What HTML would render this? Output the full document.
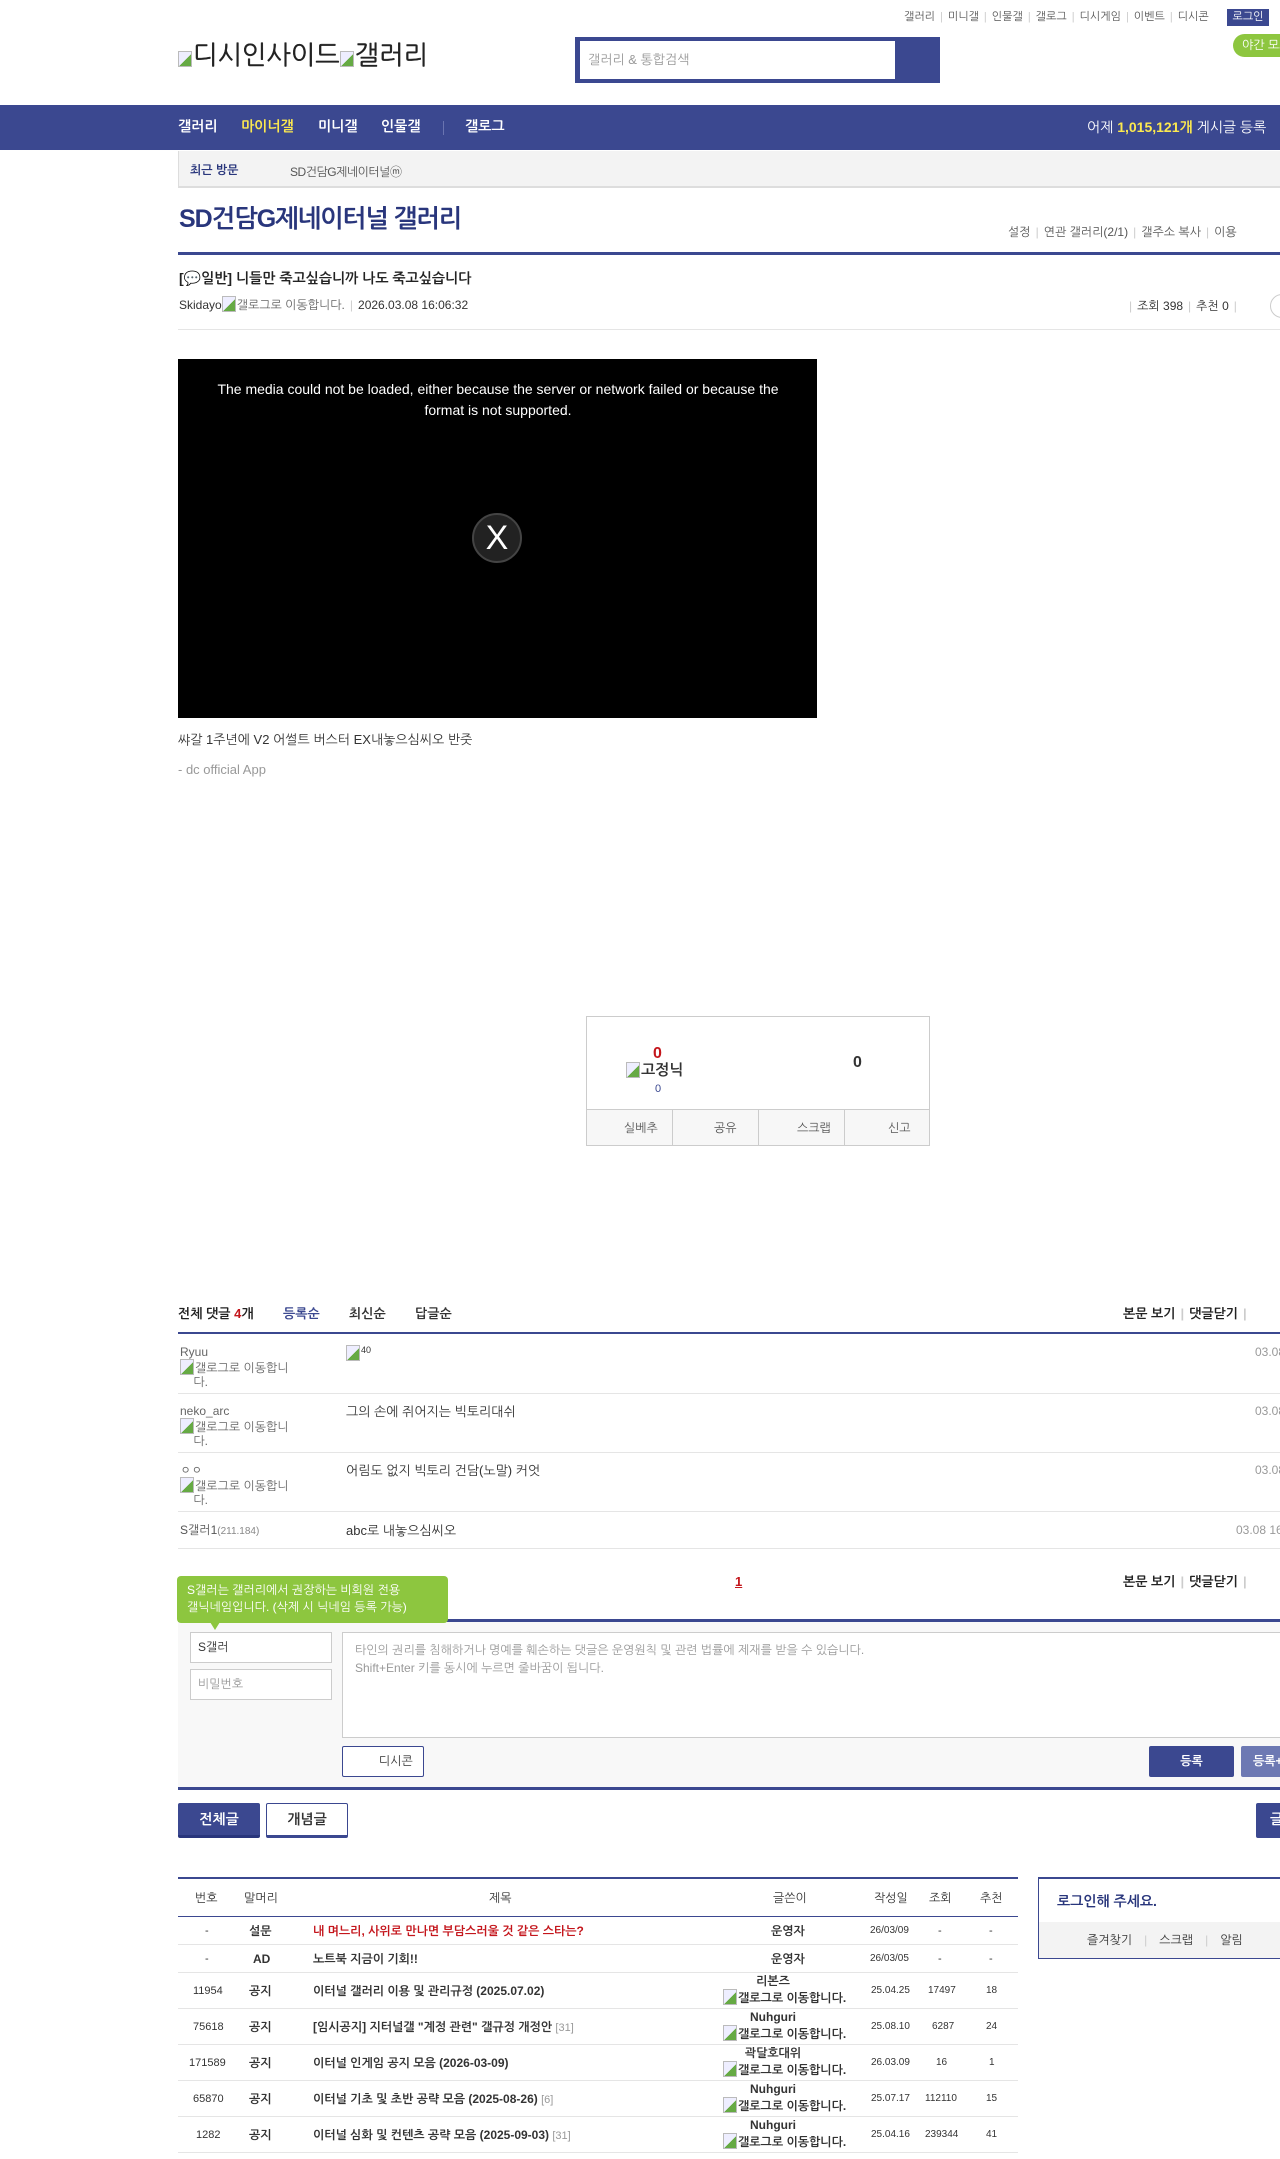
<!DOCTYPE html>
<html><head><meta charset="utf-8">
<style>
*{margin:0;padding:0;box-sizing:border-box}
html,body{width:1280px;height:2159px;overflow:hidden;background:#fff}
body{position:relative;font-family:"Liberation Sans","NanumGothic","Noto Sans CJK KR",sans-serif;font-size:12px;color:#333}
.a{position:absolute;white-space:nowrap}
.bi{display:inline-block;width:14px;height:16px;border:1px solid #bbb;background:linear-gradient(135deg,#eef 0 55%,#6a4 55%);vertical-align:-3px;margin-right:1px}
.nav{color:#fff;font-weight:bold;font-size:14px}
.sep{color:#ccc;margin:0 5px}
.hr{position:absolute;height:1px;background:#e5e5e5}
.bl{position:absolute;background:#3b4890}
</style></head><body>

<div class="a" style="left:904px;top:10px;font-size:11px;color:#555">갤러리<span class="sep">|</span>미니갤<span class="sep">|</span>인물갤<span class="sep">|</span>갤로그<span class="sep">|</span>디시게임<span class="sep">|</span>이벤트<span class="sep">|</span>디시콘</div>
<div class="a" style="left:1227px;top:9px;width:42px;height:17px;background:#3b4890;color:#fff;font-size:11px;text-align:center;line-height:17px">로그인</div>
<div class="a" style="left:1233px;top:34px;width:60px;height:23px;background:#8dc63f;border-radius:12px;color:#fff;font-size:12px;line-height:23px;padding-left:9px">야간 모드</div>

<div class="a" style="left:178px;top:39px;font-size:26px;color:#222;line-height:32px;-webkit-text-stroke:0.4px #222"><span class="bi"></span>디시인사이드<span class="bi"></span>갤러리</div>

<div class="a" style="left:575px;top:37px;width:365px;height:46px;background:#3b4890"></div>
<div class="a" style="left:580px;top:41px;width:315px;height:38px;background:#fff;color:#999;font-size:13px;line-height:38px;padding-left:8px">갤러리 &amp; 통합검색</div>

<div class="a" style="left:0;top:105px;width:1280px;height:45px;background:#3b4890"></div>
<div class="a nav" style="left:178px;top:118px">갤러리</div>
<div class="a nav" style="left:241px;top:118px;color:#fce94f">마이너갤</div>
<div class="a nav" style="left:318px;top:118px">미니갤</div>
<div class="a nav" style="left:381px;top:118px">인물갤</div>
<div class="a" style="left:443px;top:121px;width:1px;height:14px;background:#6a74b0"></div>
<div class="a nav" style="left:465px;top:118px">갤로그</div>
<div class="a" style="left:1087px;top:119px;color:#fff;font-size:14px">어제 <b style="color:#fce94f">1,015,121개</b> 게시글 등록</div>

<div class="a" style="left:178px;top:151px;width:1102px;height:37px;background:#f3f3f3;border-left:1px solid #ddd;border-bottom:2px solid #ddd"></div>
<div class="a" style="left:190px;top:163px;font-size:12px;font-weight:bold;color:#29367c">최근 방문</div>
<div class="a" style="left:290px;top:163px;font-size:12px;color:#555;letter-spacing:-0.5px">SD건담G제네이터널ⓜ</div>

<div class="a" style="left:179px;top:205px;font-size:25px;font-weight:bold;color:#29367c;letter-spacing:-1px">SD건담G제네이터널 갤러리</div>
<div class="a" style="left:1008px;top:225px;font-size:12px;color:#555">설정<span class="sep">|</span>연관 갤러리(2/1)<span class="sep">|</span>갤주소 복사<span class="sep">|</span>이용</div>
<div class="bl" style="left:178px;top:252px;width:1102px;height:3px"></div>

<div class="a" style="left:179px;top:270px;font-size:14px;font-weight:bold;color:#222">[💬일반] 니들만 죽고싶습니까 나도 죽고싶습니다</div>
<div class="a" style="left:179px;top:296px;font-size:12px;color:#333">Skidayo<span class="bi"></span><span style="color:#666">갤로그로 이동합니다.</span><span class="sep">|</span>2026.03.08 16:06:32</div>
<div class="a" style="left:1124px;top:299px;font-size:12px;color:#333"><span class="sep">|</span>조회 398<span class="sep">|</span>추천 0<span class="sep">|</span></div>
<div class="a" style="left:1270px;top:294px;width:24px;height:24px;border:1px solid #ccc;border-radius:12px"></div>
<div class="hr" style="left:178px;top:329px;width:1102px"></div>

<div class="a" style="left:178px;top:359px;width:639px;height:359px;background:#000"></div>
<div class="a" style="left:198px;top:379px;width:600px;white-space:normal;text-align:center;color:#fff;font-size:14px;line-height:21px">The media could not be loaded, either because the server or network failed or because the format is not supported.</div>
<div class="a" style="left:472px;top:513px;width:50px;height:50px;border-radius:25px;background:#222;border:2px solid #444;color:#fff;font-size:34px;line-height:46px;text-align:center">X</div>

<div class="a" style="left:178px;top:732px;font-size:13px;color:#333">쌰갈 1주년에 V2 어썰트 버스터 EX내놓으심씨오 반줏</div>
<div class="a" style="left:178px;top:762px;font-size:13px;color:#999">- dc official App</div>

<div class="a" style="left:586px;top:1016px;width:344px;height:130px;border:1px solid #ccc"></div>
<div class="a" style="left:586px;top:1109px;width:344px;height:37px;background:#f7f7f7;border:1px solid #ccc"></div>
<div class="a" style="left:672px;top:1109px;width:1px;height:37px;background:#ccc"></div>
<div class="a" style="left:758px;top:1109px;width:1px;height:37px;background:#ccc"></div>
<div class="a" style="left:844px;top:1109px;width:1px;height:37px;background:#ccc"></div>
<div class="a" style="left:624px;top:1121px;font-size:12px;color:#555">실베추</div>
<div class="a" style="left:714px;top:1121px;font-size:12px;color:#555">공유</div>
<div class="a" style="left:797px;top:1121px;font-size:12px;color:#555">스크랩</div>
<div class="a" style="left:888px;top:1121px;font-size:12px;color:#555">신고</div>
<div class="a" style="left:653px;top:1045px;font-size:16px;font-weight:bold;color:#c4161c">0</div>
<div class="a" style="left:626px;top:1062px;font-size:15px;font-weight:bold;color:#333"><span class="bi"></span>고정닉</div>
<div class="a" style="left:655px;top:1083px;font-size:11px;color:#3b4890">0</div>
<div class="a" style="left:853px;top:1054px;font-size:16px;font-weight:bold;color:#333">0</div>

<div class="a" style="left:178px;top:1306px;font-size:13px;font-weight:bold;color:#222">전체 댓글 <span style="color:#c4161c">4</span>개</div>
<div class="a" style="left:283px;top:1306px;font-size:13px;font-weight:bold;color:#3b4890">등록순</div>
<div class="a" style="left:349px;top:1306px;font-size:13px;font-weight:bold;color:#333">최신순</div>
<div class="a" style="left:415px;top:1306px;font-size:13px;font-weight:bold;color:#333">답글순</div>
<div class="a" style="left:1123px;top:1306px;font-size:13px;font-weight:bold;color:#222">본문 보기<span class="sep">|</span>댓글닫기<span class="sep">|</span></div>
<div class="bl" style="left:178px;top:1332px;width:1102px;height:2px"></div>

<div class="a" style="left:180px;top:1345px;font-size:12px;color:#666;line-height:14px">Ryuu<br><span class="bi"></span>갤로그로 이동합니<br>&nbsp;&nbsp;&nbsp;&nbsp;다.</div>
<div class="a" style="left:346px;top:1345px"><span class="bi"></span><span style="font-size:9px;vertical-align:top">40</span></div>
<div class="a" style="left:1255px;top:1345px;font-size:12px;color:#999">03.08</div>
<div class="hr" style="left:178px;top:1393px;width:1102px"></div>

<div class="a" style="left:180px;top:1404px;font-size:12px;color:#666;line-height:14px">neko_arc<br><span class="bi"></span>갤로그로 이동합니<br>&nbsp;&nbsp;&nbsp;&nbsp;다.</div>
<div class="a" style="left:346px;top:1404px;font-size:13px;color:#333">그의 손에 쥐어지는 빅토리대쉬</div>
<div class="a" style="left:1255px;top:1404px;font-size:12px;color:#999">03.08</div>
<div class="hr" style="left:178px;top:1452px;width:1102px"></div>

<div class="a" style="left:180px;top:1463px;font-size:12px;color:#666;line-height:14px">ㅇㅇ<br><span class="bi"></span>갤로그로 이동합니<br>&nbsp;&nbsp;&nbsp;&nbsp;다.</div>
<div class="a" style="left:346px;top:1463px;font-size:13px;color:#333">어림도 없지 빅토리 건담(노말) 커엇</div>
<div class="a" style="left:1255px;top:1463px;font-size:12px;color:#999">03.08</div>
<div class="hr" style="left:178px;top:1511px;width:1102px"></div>

<div class="a" style="left:180px;top:1523px;font-size:12px;color:#555">S갤러1<span style="font-size:10px;color:#888">(211.184)</span></div>
<div class="a" style="left:346px;top:1523px;font-size:13px;color:#333">abc로 내놓으심씨오</div>
<div class="a" style="left:1236px;top:1523px;font-size:12px;color:#999">03.08 16</div>
<div class="hr" style="left:178px;top:1548px;width:1102px"></div>

<div class="a" style="left:735px;top:1574px;font-size:13px;font-weight:bold;color:#c4161c;text-decoration:underline">1</div>
<div class="a" style="left:1123px;top:1574px;font-size:13px;font-weight:bold;color:#222">본문 보기<span class="sep">|</span>댓글닫기<span class="sep">|</span></div>

<div class="a" style="left:178px;top:1619px;width:1102px;height:171px;background:#f8f8f8;border-top:3px solid #3b4890;border-bottom:3px solid #3b4890"></div>
<div class="a" style="left:177px;top:1576px;width:271px;height:47px;background:#8dc63f;border-radius:4px;color:#fff;font-size:12px;line-height:17px;padding:6px 40px 6px 10px;white-space:normal">S갤러는 갤러리에서 권장하는 비회원 전용 갤닉네임입니다. (삭제 시 닉네임 등록 가능)</div>
<div class="a" style="left:210px;top:1622px;width:0;height:0;border-left:5px solid transparent;border-right:5px solid transparent;border-top:8px solid #8dc63f"></div>
<div class="a" style="left:190px;top:1632px;width:142px;height:31px;background:#fff;border:1px solid #ccc;font-size:12px;color:#333;line-height:29px;padding-left:7px">S갤러</div>
<div class="a" style="left:190px;top:1669px;width:142px;height:31px;background:#fff;border:1px solid #ccc;font-size:12px;color:#999;line-height:29px;padding-left:7px">비밀번호</div>
<div class="a" style="left:342px;top:1632px;width:950px;height:106px;background:#fff;border:1px solid #ccc;font-size:12px;color:#999;line-height:18px;padding:8px 12px">타인의 권리를 침해하거나 명예를 훼손하는 댓글은 운영원칙 및 관련 법률에 제재를 받을 수 있습니다.<br>Shift+Enter 키를 동시에 누르면 줄바꿈이 됩니다.</div>
<div class="a" style="left:342px;top:1746px;width:82px;height:31px;background:#fff;border:1px solid #3b4890;border-radius:2px;font-size:12px;color:#333;line-height:29px;padding-left:36px">디시콘</div>
<div class="a" style="left:1149px;top:1746px;width:85px;height:31px;background:#3b4890;border-radius:2px;color:#fff;font-size:12px;font-weight:bold;line-height:31px;text-align:center">등록</div>
<div class="a" style="left:1241px;top:1746px;width:60px;height:31px;background:#6d79b3;border-radius:2px;color:#fff;font-size:12px;font-weight:bold;line-height:31px;padding-left:12px">등록+</div>

<div class="a" style="left:178px;top:1803px;width:82px;height:35px;background:#3b4890;border-bottom:3px solid #29367c;border-radius:2px;color:#fff;font-size:14px;font-weight:bold;line-height:32px;text-align:center">전체글</div>
<div class="a" style="left:266px;top:1803px;width:82px;height:35px;background:#fff;border:1px solid #3b4890;border-bottom:3px solid #3b4890;border-radius:2px;color:#333;font-size:14px;font-weight:bold;line-height:30px;text-align:center">개념글</div>
<div class="a" style="left:1256px;top:1803px;width:40px;height:35px;background:#3b4890;border-radius:2px;color:#fff;font-size:14px;font-weight:bold;line-height:32px;padding-left:14px">글</div>

<div class="bl" style="left:178px;top:1877px;width:840px;height:2px"></div>
<div class="bl" style="left:178px;top:1916px;width:840px;height:1px"></div>
<div class="a" style="left:195px;top:1891px;font-size:12px;color:#333">번호</div>
<div class="a" style="left:244px;top:1891px;font-size:12px;color:#333">말머리</div>
<div class="a" style="left:489px;top:1891px;font-size:12px;color:#333">제목</div>
<div class="a" style="left:773px;top:1891px;font-size:12px;color:#333">글쓴이</div>
<div class="a" style="left:874px;top:1891px;font-size:12px;color:#333">작성일</div>
<div class="a" style="left:929px;top:1891px;font-size:12px;color:#333">조회</div>
<div class="a" style="left:980px;top:1891px;font-size:12px;color:#333">추천</div>

<div style="position:absolute;left:178px;top:1917px;width:840px;font-size:12px">
<div style="height:28px;border-bottom:1px solid #e5e5e5;position:relative">
<span class="a" style="left:27px;top:8px;font-size:11px">-</span><span class="a" style="left:71px;top:7px;font-weight:bold">설문</span>
<span class="a" style="left:135px;top:7px;font-weight:bold;color:#c4161c">내 며느리, 사위로 만나면 부담스러울 것 같은 스타는?</span>
<span class="a" style="left:593px;top:7px;font-weight:bold">운영자</span><span class="a" style="left:692px;top:8px;font-size:10px">26/03/09</span><span class="a" style="left:760px;top:8px;font-size:11px">-</span><span class="a" style="left:811px;top:8px;font-size:11px">-</span></div>
<div style="height:28px;border-bottom:1px solid #e5e5e5;position:relative">
<span class="a" style="left:27px;top:8px;font-size:11px">-</span><span class="a" style="left:75px;top:7px;font-weight:bold">AD</span>
<span class="a" style="left:135px;top:7px;font-weight:bold">노트북 지금이 기회!!</span>
<span class="a" style="left:593px;top:7px;font-weight:bold">운영자</span><span class="a" style="left:692px;top:8px;font-size:10px">26/03/05</span><span class="a" style="left:760px;top:8px;font-size:11px">-</span><span class="a" style="left:811px;top:8px;font-size:11px">-</span></div>
</div>

<div style="position:absolute;left:178px;top:1973px;width:840px;font-size:12px">
<div style="height:36px;border-bottom:1px solid #e5e5e5;position:relative">
<span class="a" style="left:15px;top:12px;font-size:11px">11954</span><span class="a" style="left:71px;top:11px;font-weight:bold">공지</span>
<span class="a" style="left:135px;top:11px;font-weight:bold">이터널 갤러리 이용 및 관리규정 (2025.07.02)</span>
<span class="a" style="left:545px;top:0;width:100px;text-align:center;font-weight:bold;line-height:16px">리본즈<br><span class="bi"></span>갤로그로 이동합니다.</span>
<span class="a" style="left:693px;top:12px;font-size:10px">25.04.25</span><span class="a" style="left:750px;top:12px;font-size:10px">17497</span><span class="a" style="left:808px;top:12px;font-size:10px">18</span></div>
<div style="height:36px;border-bottom:1px solid #e5e5e5;position:relative">
<span class="a" style="left:15px;top:12px;font-size:11px">75618</span><span class="a" style="left:71px;top:11px;font-weight:bold">공지</span>
<span class="a" style="left:135px;top:11px;font-weight:bold">[임시공지] 지터널갤 "계정 관련" 갤규정 개정안 <span style="color:#999;font-weight:normal;font-size:11px">[31]</span></span>
<span class="a" style="left:545px;top:0;width:100px;text-align:center;font-weight:bold;line-height:16px">Nuhguri<br><span class="bi"></span>갤로그로 이동합니다.</span>
<span class="a" style="left:693px;top:12px;font-size:10px">25.08.10</span><span class="a" style="left:754px;top:12px;font-size:10px">6287</span><span class="a" style="left:808px;top:12px;font-size:10px">24</span></div>
<div style="height:36px;border-bottom:1px solid #e5e5e5;position:relative">
<span class="a" style="left:11px;top:12px;font-size:11px">171589</span><span class="a" style="left:71px;top:11px;font-weight:bold">공지</span>
<span class="a" style="left:135px;top:11px;font-weight:bold">이터널 인게임 공지 모음 (2026-03-09)</span>
<span class="a" style="left:545px;top:0;width:100px;text-align:center;font-weight:bold;line-height:16px">곽달호대위<br><span class="bi"></span>갤로그로 이동합니다.</span>
<span class="a" style="left:693px;top:12px;font-size:10px">26.03.09</span><span class="a" style="left:758px;top:12px;font-size:10px">16</span><span class="a" style="left:811px;top:12px;font-size:10px">1</span></div>
<div style="height:36px;border-bottom:1px solid #e5e5e5;position:relative">
<span class="a" style="left:15px;top:12px;font-size:11px">65870</span><span class="a" style="left:71px;top:11px;font-weight:bold">공지</span>
<span class="a" style="left:135px;top:11px;font-weight:bold">이터널 기초 및 초반 공략 모음 (2025-08-26) <span style="color:#999;font-weight:normal;font-size:11px">[6]</span></span>
<span class="a" style="left:545px;top:0;width:100px;text-align:center;font-weight:bold;line-height:16px">Nuhguri<br><span class="bi"></span>갤로그로 이동합니다.</span>
<span class="a" style="left:693px;top:12px;font-size:10px">25.07.17</span><span class="a" style="left:747px;top:12px;font-size:10px">112110</span><span class="a" style="left:808px;top:12px;font-size:10px">15</span></div>
<div style="height:36px;border-bottom:1px solid #e5e5e5;position:relative">
<span class="a" style="left:18px;top:12px;font-size:11px">1282</span><span class="a" style="left:71px;top:11px;font-weight:bold">공지</span>
<span class="a" style="left:135px;top:11px;font-weight:bold">이터널 심화 및 컨텐츠 공략 모음 (2025-09-03) <span style="color:#999;font-weight:normal;font-size:11px">[31]</span></span>
<span class="a" style="left:545px;top:0;width:100px;text-align:center;font-weight:bold;line-height:16px">Nuhguri<br><span class="bi"></span>갤로그로 이동합니다.</span>
<span class="a" style="left:693px;top:12px;font-size:10px">25.04.16</span><span class="a" style="left:747px;top:12px;font-size:10px">239344</span><span class="a" style="left:808px;top:12px;font-size:10px">41</span></div>
</div>

<div class="a" style="left:1038px;top:1877px;width:260px;height:82px;border:1px solid #3b4890;border-top-width:2px;border-right:none"></div>
<div class="a" style="left:1039px;top:1922px;width:250px;height:36px;background:#f3f3f3"></div>
<div class="a" style="left:1057px;top:1893px;font-size:14px;font-weight:bold;color:#29367c">로그인해 주세요.</div>
<div class="a" style="left:1087px;top:1933px;font-size:12px;color:#333">즐겨찾기<span class="sep" style="margin:0 12px">|</span>스크랩<span class="sep" style="margin:0 12px">|</span>알림</div>

</body></html>
